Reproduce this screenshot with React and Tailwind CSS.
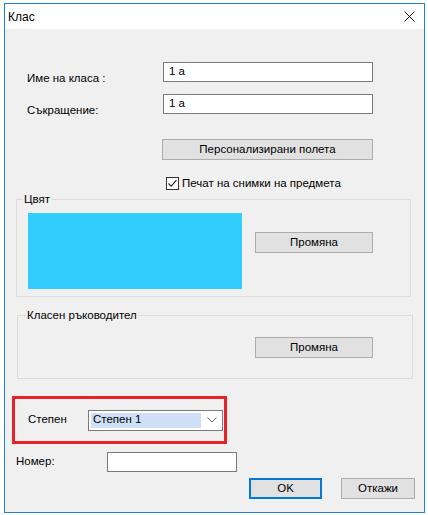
import React from 'react';

const font = { fontFamily: '"Liberation Sans", "Noto Sans", sans-serif' };

const Button = ({ children, className = '' }) => (
  <div className={`h-[21px] flex items-center justify-center bg-[#e1e1e1] border border-[#adadad] text-[11.5px] text-black ${className}`}>
    {children}
  </div>
);

const Input = ({ value, className = '' }) => (
  <div className={`h-[20px] bg-white border border-[#7a7a7a] flex items-center pl-[5px] text-[11.5px] ${className}`}>
    {value}
  </div>
);

export default function App() {
  return (
    <div className="w-[428px] h-[515px] bg-white pt-[3px] pl-[4px]" style={font}>
      <div className="w-[421px] h-[510px] border border-[#1883d7] flex flex-col">
        {/* Title bar */}
        <div className="h-[25px] bg-white flex items-center justify-between pl-[3px] pr-[9px] text-[12px] text-black">
          <span>Клас</span>
          <svg width="11" height="11" viewBox="0 0 11 11">
            <path d="M0.5 0.5 L10.5 10.5 M10.5 0.5 L0.5 10.5" stroke="#111" strokeWidth="1" />
          </svg>
        </div>

        {/* Client */}
        <div className="flex-1 bg-[#f0f0f0] text-[11.5px] text-black flex flex-col">
          <div className="flex items-center mt-[33px] h-[20px]">
            <span className="w-[158px] pl-[22px] pt-[13px]">Име на класа :</span>
            <Input value="1 a" className="w-[210px]" />
          </div>
          <div className="flex items-center mt-[12px] h-[20px]">
            <span className="w-[158px] pl-[22px] pt-[13px]">Съкращение:</span>
            <Input value="1 a" className="w-[210px]" />
          </div>

          <div className="flex mt-[25px] pl-[157px]">
            <Button className="w-[211px]">Персонализирани полета</Button>
          </div>

          <div className="flex items-center mt-[17px] pl-[161px] h-[13px] gap-[3px]">
            <div className="w-[13px] h-[13px] bg-white border border-[#333] flex items-center justify-center">
              <svg width="11" height="11" viewBox="0 0 11 11">
                <path d="M1.5 5.5 L4.2 8.2 L9.5 2.2" stroke="#222" strokeWidth="1.1" fill="none" />
              </svg>
            </div>
            <span>Печат на снимки на предмета</span>
          </div>

          {/* Group Цвят */}
          <fieldset className="mt-[1px] ml-[11px] w-[395px] h-[106px] border border-[#dcdcdc] px-0">
            <legend className="ml-[6px] px-[1px] leading-[16px]">Цвят</legend>
            <div className="flex items-start pl-[11px] pt-[6px]">
              <div className="w-[214px] h-[76px] bg-[#33ccff]" />
              <Button className="w-[118px] ml-[13px] mt-[19px]">Промяна</Button>
            </div>
          </fieldset>

          {/* Group Класен ръководител */}
          <fieldset className="mt-[10px] ml-[12px] w-[396px] h-[72px] border border-[#dcdcdc] px-0">
            <legend className="ml-[8px] px-[1px] leading-[16px]">Класен ръководител</legend>
            <div className="flex pl-[237px] pt-[14px]">
              <Button className="w-[118px]">Промяна</Button>
            </div>
          </fieldset>

          {/* Степен */}
          <div className="mt-[17px] ml-[7px] w-[215px] h-[48px] border-[3px] border-[#e8202a] flex items-center">
            <span className="w-[73px] pl-[13px]">Степен</span>
            <div className="w-[135px] h-[21px] bg-white border border-[#7a7a7a] flex items-center pl-[2px] pr-[5px]">
              <div className="w-[112px] h-[15px] bg-[#cde0f8] flex items-center pl-[2px]">Степен 1</div>
              <svg width="10" height="6" viewBox="0 0 10 6" className="ml-[6px]">
                <path d="M0.5 0.5 L5 5 L9.5 0.5" stroke="#555" strokeWidth="1" fill="none" />
              </svg>
            </div>
          </div>

          {/* Номер */}
          <div className="flex items-center mt-[8px] h-[20px]">
            <span className="w-[102px] pl-[11px]">Номер:</span>
            <Input value="" className="w-[130px]" />
          </div>

          {/* Buttons */}
          <div className="flex mt-[6px] pl-[244px] gap-[19px]">
            <div className="w-[73px] h-[21px] flex items-center justify-center bg-[#e1e1e1] border-2 border-[#0078d7]">OK</div>
            <Button className="w-[74px]">Откажи</Button>
          </div>
        </div>
      </div>
    </div>
  );
}
